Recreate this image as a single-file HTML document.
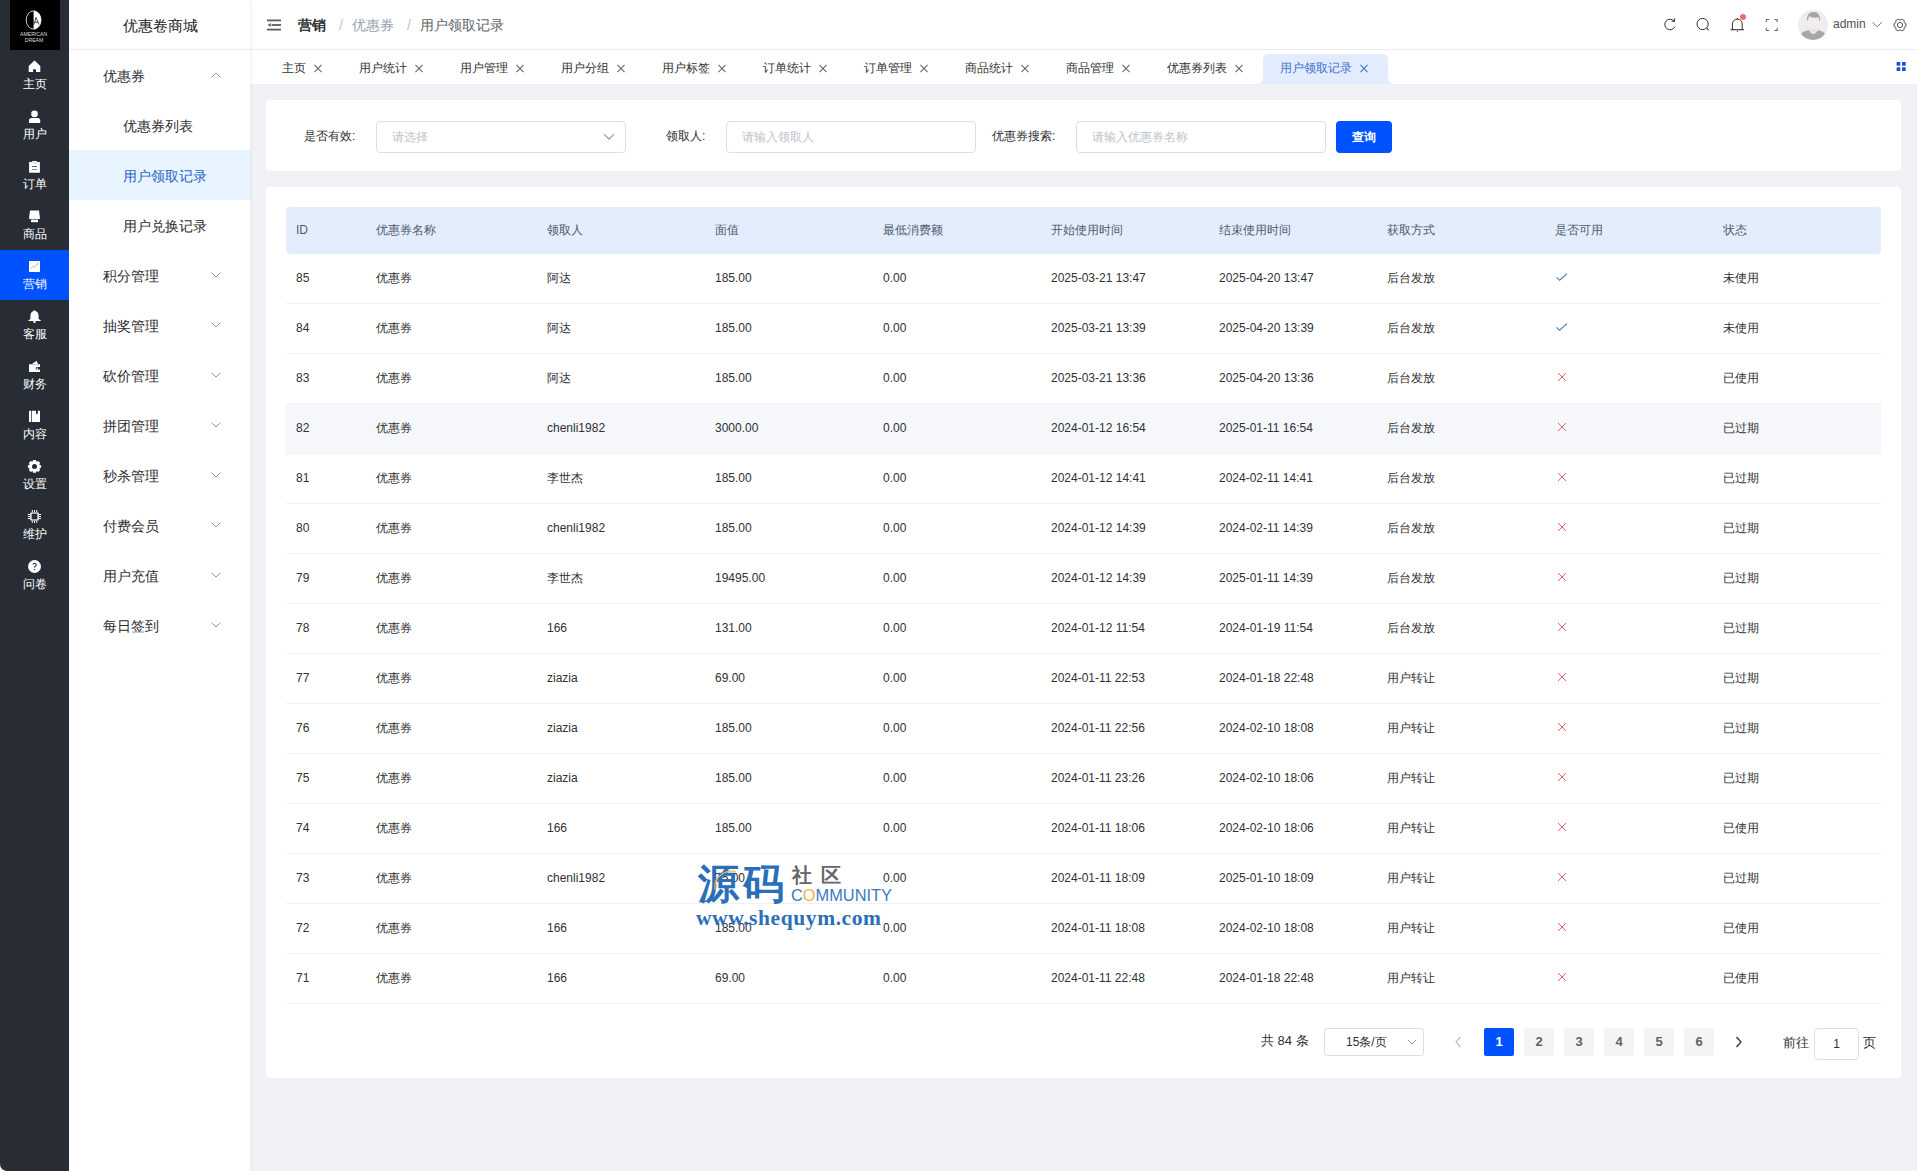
<!DOCTYPE html>
<html><head><meta charset="utf-8">
<style>
*{box-sizing:border-box;margin:0;padding:0}
html,body{width:1917px;height:1171px;overflow:hidden;background:#f0f2f5;font-family:"Liberation Sans",sans-serif;color:#303133}
.abs{position:absolute}
#side1{position:absolute;left:0;top:0;width:69px;height:1171px;background:#282c34;z-index:3;border-bottom-left-radius:7px}
#logo{position:absolute;left:10px;top:0;width:50px;height:50px;background:#000}
.s1{position:absolute;left:0;width:69px;height:50px;color:#fff;text-align:center}
.s1 .ic{position:absolute;left:24px;top:5px}
.s1 .lb{position:absolute;left:0;width:69px;top:26px;font-size:12px;line-height:16px}
.s1.on{background:#0052ff}
#side2{position:absolute;left:69px;top:0;width:181px;height:1171px;background:#fff;z-index:2;box-shadow:1px 0 4px rgba(0,21,41,.06)}
#side2 .title{position:absolute;left:0;top:0;width:181px;height:50px;line-height:50px;text-align:center;font-size:15px;color:#1f2124;padding-left:1px;padding-top:1px;border-bottom:1px solid #e9ebef}
.m{position:absolute;left:0;width:181px;height:50px;line-height:50px;padding-top:1px;font-size:14px;color:#2b2d31}
.m.l1{padding-left:34px}
.m.l2{padding-left:54px}
.m.on{background:#e8f4ff;color:#2a62c9}
.chev{position:absolute;left:142px;top:22px}
#header{position:absolute;left:250px;top:0;width:1667px;height:50px;background:#fff;border-bottom:1px solid #e9ebef}
#tabs{position:absolute;left:250px;top:50px;width:1667px;height:34px;background:#fff}
.tab{position:absolute;top:60px;height:16px;line-height:16px;font-size:12px;color:#303133;white-space:nowrap}
.tabx{position:absolute;top:64px;width:8px;height:8px}
.tabx:before,.tabx:after{content:"";position:absolute;left:-1.5px;top:3.5px;width:10px;height:1px;background:#606266;transform:rotate(45deg)}
.tabx:after{transform:rotate(-45deg)}
.tab.on{color:#3a6ecf}
.tabx.on:before,.tabx.on:after{background:#3a6ecf}
.card{position:absolute;background:#fff;border-radius:4px}
.lbl{position:absolute;top:128px;font-size:12px;line-height:16px;color:#303133;white-space:nowrap}
.inp{position:absolute;top:121px;width:250px;height:32px;border:1px solid #dcdfe6;border-radius:4px;background:#fff}
.ph{position:absolute;left:15px;top:7px;font-size:12px;line-height:16px;color:#c0c4cc;white-space:nowrap}
.btn{position:absolute;left:1336px;top:121px;width:56px;height:32px;border-radius:4px;background:#0052ff;color:#fff;font-size:12px;line-height:32px;text-align:center;font-weight:bold}
.thead{position:absolute;left:286px;top:207px;width:1595px;height:47px;background:#e3edfc;border-radius:4px}
.th{position:absolute;top:222px;font-size:12px;line-height:16px;color:#515a6e;white-space:nowrap}
.td{position:absolute;height:50px;line-height:50px;font-size:12px;color:#303133;white-space:nowrap}
.td svg{vertical-align:middle;position:relative;top:-2px}
.rowline{position:absolute;left:286px;width:1595px;height:1px;background:#eef0f3}
.hover{position:absolute;left:286px;width:1595px;height:50px;background:#f5f7fa}
.pg{position:absolute;top:1028px;width:30px;height:28px;line-height:28px;text-align:center;font-size:13px;font-weight:bold;color:#606266;background:#f4f4f5;border-radius:2px}
.pg.on{background:#0052ff;color:#fff}

</style></head>
<body>
<div class="abs" style="left:0;top:1160px;width:12px;height:11px;background:#fff"></div>
<div id="side1">
  <div id="logo"><svg width="50" height="50" viewBox="0 0 50 50" style="position:absolute;left:0;top:0">
<rect width="50" height="50" fill="#000"/>
<path d="M23.6 10.8 A7.5 9.2 0 0 1 23.6 29.2 Z" fill="#fff"/>
<ellipse cx="23.6" cy="20" rx="7.4" ry="9.1" fill="none" stroke="#fff" stroke-width="0.8"/>
<path d="M23.9 24.6 L26 17.4 L28.9 24.6 M24.8 22.2 H28" fill="none" stroke="#000" stroke-width="0.7"/>
<text x="23.6" y="35.5" font-size="5" fill="#dcdcdc" text-anchor="middle" font-family="Liberation Sans" textLength="27" lengthAdjust="spacingAndGlyphs">AMERICAN</text>
<text x="24" y="41.8" font-size="5" fill="#dcdcdc" text-anchor="middle" font-family="Liberation Sans" textLength="18.5" lengthAdjust="spacingAndGlyphs">DREAM</text>
</svg></div>
  <div class="s1" style="top:50px"><svg class="ic" width="20" height="20" viewBox="0 0 20 20"><path d="M10.5 5.6 L16.3 11 V17.1 H12 V14.2 H9.1 V17.1 H4.7 V11 Z" fill="#fff"/></svg><div class="lb">主页</div></div>
<div class="s1" style="top:100px"><svg class="ic" width="20" height="20" viewBox="0 0 20 20"><circle cx="10.5" cy="8.9" r="3.3" fill="#fff"/><path d="M5 17.9 V15.6 Q5 13 7.6 13 H13.6 Q16.2 13 16.2 15.6 V17.9 Z" fill="#fff"/></svg><div class="lb">用户</div></div>
<div class="s1" style="top:150px"><svg class="ic" width="20" height="20" viewBox="0 0 20 20"><path d="M5.1 7 H8.2 V6 H12.8 V7 H15.9 V17.8 H5.1 Z" fill="#fff"/><rect x="8.2" y="7.6" width="4.6" height="0.6" fill="#9aa"/><rect x="8" y="11" width="5" height="1" fill="#282c34" opacity=".75"/><rect x="8" y="14" width="5" height="1" fill="#282c34" opacity=".55"/></svg><div class="lb">订单</div></div>
<div class="s1" style="top:200px"><svg class="ic" width="20" height="20" viewBox="0 0 20 20"><path d="M6 5.6 H15 L16 13.6 Q15 14.6 13.7 13.8 Q12.3 14.6 10.5 13.8 Q8.7 14.6 7.3 13.8 Q6 14.6 5 13.6 Z" fill="#fff"/><path d="M7 14.6 H14 V17.2 H7 Z" fill="#fff"/></svg><div class="lb">商品</div></div>
<div class="s1 on" style="top:250px"><svg class="ic" width="20" height="20" viewBox="0 0 20 20"><rect x="5" y="6" width="11" height="11" fill="#fff"/><path d="M6.8 13.4 L8.6 11.6 L9.8 12.4 L12 10.4 L13.6 9.2" fill="none" stroke="#8a94a8" stroke-width="0.7"/><path d="M13.4 8.6 L14.4 8.4 L14.2 9.4" fill="none" stroke="#8a94a8" stroke-width="0.6"/></svg><div class="lb">营销</div></div>
<div class="s1" style="top:300px"><svg class="ic" width="20" height="20" viewBox="0 0 20 20"><path d="M10.5 5 Q11.3 6 12.5 6.6 Q14.6 7.6 14.6 10.6 V14 L16.9 15.4 V15.9 H4.3 V15.4 L6.4 14 V10.6 Q6.4 7.6 8.5 6.6 Q9.7 6 10.5 5 Z" fill="#fff"/><path d="M8.9 16.3 H12.1 Q11.9 17.9 10.5 17.9 Q9.1 17.9 8.9 16.3 Z" fill="#fff"/></svg><div class="lb">客服</div></div>
<div class="s1" style="top:350px"><svg class="ic" width="20" height="20" viewBox="0 0 20 20"><path d="M8 9 L12.6 5.8 L14 9 Z" fill="#fff"/><path d="M5 9.2 H16 V11.9 H13.2 Q11.6 11.9 11.6 13.2 Q11.6 14.6 13.2 14.6 H16 V17 H5 Z" fill="#fff"/><circle cx="13.3" cy="13.2" r="0.8" fill="#fff"/></svg><div class="lb">财务</div></div>
<div class="s1" style="top:400px"><svg class="ic" width="20" height="20" viewBox="0 0 20 20"><path d="M5 5.8 H7.2 V17 H5 Z" fill="#fff"/><path d="M7.9 5.8 H12 V9.6 L12.9 8.6 L13.8 9.6 V5.8 H16 V17 H7.9 Z" fill="#fff"/></svg><div class="lb">内容</div></div>
<div class="s1" style="top:450px"><svg class="ic" width="20" height="20" viewBox="0 0 20 20"><path d="M9 5 H12 L12.5 6.8 L14.2 5.9 L16.2 8 L15.3 9.7 L17.1 10.2 V12.8 L15.3 13.3 L16.2 15 L14.2 17 L12.5 16.1 L12 17.8 H9 L8.5 16.1 L6.8 17 L4.8 15 L5.7 13.3 L3.9 12.8 V10.2 L5.7 9.7 L4.8 8 L6.8 5.9 L8.5 6.8 Z" fill="#fff"/><circle cx="10.5" cy="11.5" r="2.5" fill="#282c34"/></svg><div class="lb">设置</div></div>
<div class="s1" style="top:500px"><svg class="ic" width="20" height="20" viewBox="0 0 20 20"><rect x="6.2" y="7.4" width="8.6" height="8.2" rx="1.2" fill="#fff"/><rect x="7.6" y="8.6" width="5.8" height="5.8" fill="#282c34"/><path d="M8.3 5 V7.4 M10.5 5 V7.4 M12.7 5 V7.4 M8.3 15.6 V17.8 M10.5 15.6 V17.8 M12.7 15.6 V17.8 M3.8 9.5 H6.2 M3.8 11.5 H6.2 M3.8 13.5 H6.2 M14.8 9.5 H17 M14.8 11.5 H17 M14.8 13.5 H17" stroke="#fff" stroke-width="1"/></svg><div class="lb">维护</div></div>
<div class="s1" style="top:550px"><svg class="ic" width="20" height="20" viewBox="0 0 20 20"><circle cx="10.5" cy="11.5" r="6.5" fill="#fff"/><path d="M9 9.6 Q9 8.2 10.6 8.2 Q12.2 8.2 12.2 9.6 Q12.2 10.6 11.2 11.2 Q10.5 11.6 10.5 12.6" fill="none" stroke="#282c34" stroke-width="1.1"/><circle cx="10.5" cy="14.6" r="0.7" fill="#282c34"/></svg><div class="lb">问卷</div></div>

</div>
<div id="side2">
  <div class="title">优惠卷商城</div>
  <div class="m l1" style="top:50px">优惠券<svg class="chev" width="10" height="6" viewBox="0 0 10 6"><path d="M0.6 5.4 L5 1 L9.4 5.4" fill="none" stroke="#909399" stroke-width="1"/></svg></div>
<div class="m l2" style="top:100px">优惠券列表</div>
<div class="m l2 on" style="top:150px">用户领取记录</div>
<div class="m l2" style="top:200px">用户兑换记录</div>
<div class="m l1" style="top:250px">积分管理<svg class="chev" width="10" height="6" viewBox="0 0 10 6"><path d="M0.6 0.6 L5 5 L9.4 0.6" fill="none" stroke="#909399" stroke-width="1"/></svg></div>
<div class="m l1" style="top:300px">抽奖管理<svg class="chev" width="10" height="6" viewBox="0 0 10 6"><path d="M0.6 0.6 L5 5 L9.4 0.6" fill="none" stroke="#909399" stroke-width="1"/></svg></div>
<div class="m l1" style="top:350px">砍价管理<svg class="chev" width="10" height="6" viewBox="0 0 10 6"><path d="M0.6 0.6 L5 5 L9.4 0.6" fill="none" stroke="#909399" stroke-width="1"/></svg></div>
<div class="m l1" style="top:400px">拼团管理<svg class="chev" width="10" height="6" viewBox="0 0 10 6"><path d="M0.6 0.6 L5 5 L9.4 0.6" fill="none" stroke="#909399" stroke-width="1"/></svg></div>
<div class="m l1" style="top:450px">秒杀管理<svg class="chev" width="10" height="6" viewBox="0 0 10 6"><path d="M0.6 0.6 L5 5 L9.4 0.6" fill="none" stroke="#909399" stroke-width="1"/></svg></div>
<div class="m l1" style="top:500px">付费会员<svg class="chev" width="10" height="6" viewBox="0 0 10 6"><path d="M0.6 0.6 L5 5 L9.4 0.6" fill="none" stroke="#909399" stroke-width="1"/></svg></div>
<div class="m l1" style="top:550px">用户充值<svg class="chev" width="10" height="6" viewBox="0 0 10 6"><path d="M0.6 0.6 L5 5 L9.4 0.6" fill="none" stroke="#909399" stroke-width="1"/></svg></div>
<div class="m l1" style="top:600px">每日签到<svg class="chev" width="10" height="6" viewBox="0 0 10 6"><path d="M0.6 0.6 L5 5 L9.4 0.6" fill="none" stroke="#909399" stroke-width="1"/></svg></div>

</div>
<div id="header">
</div>
<svg class="abs" style="left:267px;top:19.4px" width="15" height="12" viewBox="0 0 15 12"><rect x="0" y="0.5" width="14" height="1.8" fill="#5a5e66"/><rect x="4.5" y="5.1" width="9.5" height="1.8" fill="#5a5e66"/><rect x="0" y="9.7" width="14" height="1.8" fill="#5a5e66"/><path d="M0.6 6 L3.6 4 V8 Z" fill="#5a5e66"/></svg>
<div class="abs" style="left:298px;top:17px;font-size:14px;line-height:16px;font-weight:bold;color:#303133">营销</div>
<div class="abs" style="left:339px;top:17px;font-size:14px;line-height:16px;color:#c0c4cc">/</div>
<div class="abs" style="left:352px;top:17px;font-size:14px;line-height:16px;color:#97a0ac">优惠券</div>
<div class="abs" style="left:407px;top:17px;font-size:14px;line-height:16px;color:#c0c4cc">/</div>
<div class="abs" style="left:420px;top:17px;font-size:14px;line-height:16px;color:#606266">用户领取记录</div>

<svg class="abs" style="left:1660px;top:15px" width="20" height="20" viewBox="0 0 20 20"><path d="M14.4 6.4 A5.3 5.3 0 1 0 15 11.5" fill="none" stroke="#303133" stroke-width="1"/><path d="M11.6 6.3 H14.6 V3.3" fill="none" stroke="#303133" stroke-width="1"/></svg>
<svg class="abs" style="left:1693px;top:14px" width="20" height="20" viewBox="0 0 20 20"><circle cx="9.6" cy="10" r="5.6" fill="none" stroke="#303133" stroke-width="1"/><path d="M13.6 14 L15.6 16.2" stroke="#303133" stroke-width="1.1"/></svg>
<svg class="abs" style="left:1727px;top:10px" width="24" height="24" viewBox="0 0 24 24"><path d="M5.4 19.5 V14 A4.9 4.9 0 0 1 15.2 14 V19.5" fill="none" stroke="#303133" stroke-width="1"/><path d="M3.6 19.7 H17" stroke="#303133" stroke-width="1.1"/><circle cx="10.3" cy="21.6" r="0.6" fill="#303133"/><circle cx="10.3" cy="8.7" r="0.6" fill="#303133"/><circle cx="16" cy="7" r="3" fill="#ef6b6b"/></svg>
<svg class="abs" style="left:1762px;top:15px" width="20" height="20" viewBox="0 0 20 20"><path d="M4.3 7.2 V4.5 H7 M12.5 4.5 H15.2 V7.2 M15.2 12.8 V15.5 H12.5 M7 15.5 H4.3 V12.8" fill="none" stroke="#50555e" stroke-width="1"/></svg>
<svg class="abs" style="left:1798px;top:10px" width="30" height="30" viewBox="0 0 30 30"><defs><clipPath id="avc"><circle cx="15" cy="15" r="15"/></clipPath></defs><circle cx="15" cy="15" r="15" fill="#ededed"/><g clip-path="url(#avc)"><path d="M1.5 25.5 Q5 20.8 11 20.2 Q13 23.8 15.3 23.8 Q17.6 23.8 19.6 20.2 Q25.6 20.8 28.5 25.5 L32 32 H-2 Z" fill="#a7a7a7"/><path d="M11 16 H19.8 V20.4 Q17.6 24 15.3 24 Q13 24 11 20.4 Z" fill="#e9e4e4"/><path d="M9.3 9 Q9.3 19.6 15.4 19.6 Q21.5 19.6 21.5 9 Z" fill="#f3eded"/><path d="M9 10.4 Q8.5 1.9 15.5 1.9 Q22.5 1.9 22.1 10.8 H21.2 Q21 7.6 20.6 7.2 Q17 7.9 14.3 7.6 Q12.7 7.1 11.6 6.1 Q10.2 7.4 10 10.4 Z" fill="#a5a5a5"/></g></svg>
<div class="abs" style="left:1833px;top:16px;font-size:12px;line-height:16px;color:#4a4f5a">admin</div>
<svg class="abs" style="left:1871px;top:20px" width="12" height="9" viewBox="0 0 12 9"><path d="M1.6 2.2 L6.2 6.8 L10.8 2.2" fill="none" stroke="#707580" stroke-width="1"/></svg>
<svg class="abs" style="left:1890px;top:14.7px" width="20" height="20" viewBox="0 0 20 20"><path d="M15.94 8.63 L15.94 11.37 L14.16 12.40 L14.16 14.46 L11.78 15.83 L10.00 14.80 L8.22 15.83 L5.84 14.46 L5.84 12.40 L4.06 11.37 L4.06 8.63 L5.84 7.60 L5.84 5.54 L8.22 4.17 L10.00 5.20 L11.78 4.17 L14.16 5.54 L14.16 7.60 Z" fill="none" stroke="#50555e" stroke-width="1" stroke-linejoin="round"/><circle cx="10" cy="10" r="2.6" fill="none" stroke="#50555e" stroke-width="1"/></svg>

<div id="tabs"></div>
<svg class="abs" style="left:1258px;top:54px" width="136" height="30" viewBox="0 0 136 30"><path d="M0 30 Q4 30 5 24 V6 Q5 0 11 0 H124 Q130 0 130 6 V24 Q131 30 135 30 Z" fill="#e3ecfc"/></svg>
<div class="tab" style="left:282px">主页</div><div class="tabx" style="left:314px"></div><div class="tab" style="left:359px">用户统计</div><div class="tabx" style="left:415px"></div><div class="tab" style="left:460px">用户管理</div><div class="tabx" style="left:516px"></div><div class="tab" style="left:561px">用户分组</div><div class="tabx" style="left:617px"></div><div class="tab" style="left:662px">用户标签</div><div class="tabx" style="left:718px"></div><div class="tab" style="left:763px">订单统计</div><div class="tabx" style="left:819px"></div><div class="tab" style="left:864px">订单管理</div><div class="tabx" style="left:920px"></div><div class="tab" style="left:965px">商品统计</div><div class="tabx" style="left:1021px"></div><div class="tab" style="left:1066px">商品管理</div><div class="tabx" style="left:1122px"></div><div class="tab" style="left:1167px">优惠券列表</div><div class="tabx" style="left:1235px"></div>
<div class="tab on" style="left:1280px">用户领取记录</div><div class="tabx on" style="left:1360px"></div>
<svg class="abs" style="left:1896px;top:62px" width="10" height="9" viewBox="0 0 10 9"><rect x="0.6" y="0" width="3.7" height="3.7" rx="0.5" fill="#1a4fd6"/><rect x="6" y="0" width="3.7" height="3.7" rx="0.5" fill="#1a4fd6"/><rect x="0.6" y="5.2" width="3.7" height="3.7" rx="0.5" fill="#1a4fd6"/><rect x="6" y="5.2" width="3.7" height="3.7" rx="0.5" fill="#1a4fd6"/></svg>

<div class="card" style="left:266px;top:100px;width:1635px;height:71px"></div>
<div class="lbl" style="left:304px">是否有效:</div>
<div class="inp" style="left:376px"><div class="ph">请选择</div>
<svg style="position:absolute;left:226px;top:11px" width="12" height="8" viewBox="0 0 12 8"><path d="M1 1.2 L6 6.2 L11 1.2" fill="none" stroke="#909399" stroke-width="1.1"/></svg></div>
<div class="lbl" style="left:666px">领取人:</div>
<div class="inp" style="left:726px"><div class="ph">请输入领取人</div></div>
<div class="lbl" style="left:992px">优惠券搜索:</div>
<div class="inp" style="left:1076px"><div class="ph">请输入优惠券名称</div></div>
<div class="btn">查询</div>

<div class="card" style="left:266px;top:187px;width:1635px;height:891px"></div>
<div class="thead"></div><div class="th" style="left:296px">ID</div><div class="th" style="left:376px">优惠券名称</div><div class="th" style="left:547px">领取人</div><div class="th" style="left:715px">面值</div><div class="th" style="left:883px">最低消费额</div><div class="th" style="left:1051px">开始使用时间</div><div class="th" style="left:1219px">结束使用时间</div><div class="th" style="left:1387px">获取方式</div><div class="th" style="left:1555px">是否可用</div><div class="th" style="left:1723px">状态</div>
<div class="rowline" style="top:303px"></div><div class="td" style="left:296px;top:253px">85</div><div class="td" style="left:376px;top:253px">优惠券</div><div class="td" style="left:547px;top:253px">阿达</div><div class="td" style="left:715px;top:253px">185.00</div><div class="td" style="left:883px;top:253px">0.00</div><div class="td" style="left:1051px;top:253px">2025-03-21 13:47</div><div class="td" style="left:1219px;top:253px">2025-04-20 13:47</div><div class="td" style="left:1387px;top:253px">后台发放</div><div class="td" style="left:1555px;top:253px"><svg class="ok" width="13" height="12" viewBox="0 0 13 12"><path d="M1.6 6.4 L4.6 9.3 L12 2.6" fill="none" stroke="#3a80b8" stroke-width="1.15"/></svg></div><div class="td" style="left:1723px;top:253px">未使用</div>
<div class="rowline" style="top:353px"></div><div class="td" style="left:296px;top:303px">84</div><div class="td" style="left:376px;top:303px">优惠券</div><div class="td" style="left:547px;top:303px">阿达</div><div class="td" style="left:715px;top:303px">185.00</div><div class="td" style="left:883px;top:303px">0.00</div><div class="td" style="left:1051px;top:303px">2025-03-21 13:39</div><div class="td" style="left:1219px;top:303px">2025-04-20 13:39</div><div class="td" style="left:1387px;top:303px">后台发放</div><div class="td" style="left:1555px;top:303px"><svg class="ok" width="13" height="12" viewBox="0 0 13 12"><path d="M1.6 6.4 L4.6 9.3 L12 2.6" fill="none" stroke="#3a80b8" stroke-width="1.15"/></svg></div><div class="td" style="left:1723px;top:303px">未使用</div>
<div class="rowline" style="top:403px"></div><div class="td" style="left:296px;top:353px">83</div><div class="td" style="left:376px;top:353px">优惠券</div><div class="td" style="left:547px;top:353px">阿达</div><div class="td" style="left:715px;top:353px">185.00</div><div class="td" style="left:883px;top:353px">0.00</div><div class="td" style="left:1051px;top:353px">2025-03-21 13:36</div><div class="td" style="left:1219px;top:353px">2025-04-20 13:36</div><div class="td" style="left:1387px;top:353px">后台发放</div><div class="td" style="left:1555px;top:353px"><svg class="no" width="13" height="12" viewBox="0 0 13 12"><path d="M3 2 L11 10 M11 2 L3 10" fill="none" stroke="#e06468" stroke-width="1"/></svg></div><div class="td" style="left:1723px;top:353px">已使用</div>
<div class="hover" style="top:403px"></div><div class="rowline" style="top:453px"></div><div class="td" style="left:296px;top:403px">82</div><div class="td" style="left:376px;top:403px">优惠券</div><div class="td" style="left:547px;top:403px">chenli1982</div><div class="td" style="left:715px;top:403px">3000.00</div><div class="td" style="left:883px;top:403px">0.00</div><div class="td" style="left:1051px;top:403px">2024-01-12 16:54</div><div class="td" style="left:1219px;top:403px">2025-01-11 16:54</div><div class="td" style="left:1387px;top:403px">后台发放</div><div class="td" style="left:1555px;top:403px"><svg class="no" width="13" height="12" viewBox="0 0 13 12"><path d="M3 2 L11 10 M11 2 L3 10" fill="none" stroke="#e06468" stroke-width="1"/></svg></div><div class="td" style="left:1723px;top:403px">已过期</div>
<div class="rowline" style="top:503px"></div><div class="td" style="left:296px;top:453px">81</div><div class="td" style="left:376px;top:453px">优惠券</div><div class="td" style="left:547px;top:453px">李世杰</div><div class="td" style="left:715px;top:453px">185.00</div><div class="td" style="left:883px;top:453px">0.00</div><div class="td" style="left:1051px;top:453px">2024-01-12 14:41</div><div class="td" style="left:1219px;top:453px">2024-02-11 14:41</div><div class="td" style="left:1387px;top:453px">后台发放</div><div class="td" style="left:1555px;top:453px"><svg class="no" width="13" height="12" viewBox="0 0 13 12"><path d="M3 2 L11 10 M11 2 L3 10" fill="none" stroke="#e06468" stroke-width="1"/></svg></div><div class="td" style="left:1723px;top:453px">已过期</div>
<div class="rowline" style="top:553px"></div><div class="td" style="left:296px;top:503px">80</div><div class="td" style="left:376px;top:503px">优惠券</div><div class="td" style="left:547px;top:503px">chenli1982</div><div class="td" style="left:715px;top:503px">185.00</div><div class="td" style="left:883px;top:503px">0.00</div><div class="td" style="left:1051px;top:503px">2024-01-12 14:39</div><div class="td" style="left:1219px;top:503px">2024-02-11 14:39</div><div class="td" style="left:1387px;top:503px">后台发放</div><div class="td" style="left:1555px;top:503px"><svg class="no" width="13" height="12" viewBox="0 0 13 12"><path d="M3 2 L11 10 M11 2 L3 10" fill="none" stroke="#e06468" stroke-width="1"/></svg></div><div class="td" style="left:1723px;top:503px">已过期</div>
<div class="rowline" style="top:603px"></div><div class="td" style="left:296px;top:553px">79</div><div class="td" style="left:376px;top:553px">优惠券</div><div class="td" style="left:547px;top:553px">李世杰</div><div class="td" style="left:715px;top:553px">19495.00</div><div class="td" style="left:883px;top:553px">0.00</div><div class="td" style="left:1051px;top:553px">2024-01-12 14:39</div><div class="td" style="left:1219px;top:553px">2025-01-11 14:39</div><div class="td" style="left:1387px;top:553px">后台发放</div><div class="td" style="left:1555px;top:553px"><svg class="no" width="13" height="12" viewBox="0 0 13 12"><path d="M3 2 L11 10 M11 2 L3 10" fill="none" stroke="#e06468" stroke-width="1"/></svg></div><div class="td" style="left:1723px;top:553px">已过期</div>
<div class="rowline" style="top:653px"></div><div class="td" style="left:296px;top:603px">78</div><div class="td" style="left:376px;top:603px">优惠券</div><div class="td" style="left:547px;top:603px">166</div><div class="td" style="left:715px;top:603px">131.00</div><div class="td" style="left:883px;top:603px">0.00</div><div class="td" style="left:1051px;top:603px">2024-01-12 11:54</div><div class="td" style="left:1219px;top:603px">2024-01-19 11:54</div><div class="td" style="left:1387px;top:603px">后台发放</div><div class="td" style="left:1555px;top:603px"><svg class="no" width="13" height="12" viewBox="0 0 13 12"><path d="M3 2 L11 10 M11 2 L3 10" fill="none" stroke="#e06468" stroke-width="1"/></svg></div><div class="td" style="left:1723px;top:603px">已过期</div>
<div class="rowline" style="top:703px"></div><div class="td" style="left:296px;top:653px">77</div><div class="td" style="left:376px;top:653px">优惠券</div><div class="td" style="left:547px;top:653px">ziazia</div><div class="td" style="left:715px;top:653px">69.00</div><div class="td" style="left:883px;top:653px">0.00</div><div class="td" style="left:1051px;top:653px">2024-01-11 22:53</div><div class="td" style="left:1219px;top:653px">2024-01-18 22:48</div><div class="td" style="left:1387px;top:653px">用户转让</div><div class="td" style="left:1555px;top:653px"><svg class="no" width="13" height="12" viewBox="0 0 13 12"><path d="M3 2 L11 10 M11 2 L3 10" fill="none" stroke="#e06468" stroke-width="1"/></svg></div><div class="td" style="left:1723px;top:653px">已过期</div>
<div class="rowline" style="top:753px"></div><div class="td" style="left:296px;top:703px">76</div><div class="td" style="left:376px;top:703px">优惠券</div><div class="td" style="left:547px;top:703px">ziazia</div><div class="td" style="left:715px;top:703px">185.00</div><div class="td" style="left:883px;top:703px">0.00</div><div class="td" style="left:1051px;top:703px">2024-01-11 22:56</div><div class="td" style="left:1219px;top:703px">2024-02-10 18:08</div><div class="td" style="left:1387px;top:703px">用户转让</div><div class="td" style="left:1555px;top:703px"><svg class="no" width="13" height="12" viewBox="0 0 13 12"><path d="M3 2 L11 10 M11 2 L3 10" fill="none" stroke="#e06468" stroke-width="1"/></svg></div><div class="td" style="left:1723px;top:703px">已过期</div>
<div class="rowline" style="top:803px"></div><div class="td" style="left:296px;top:753px">75</div><div class="td" style="left:376px;top:753px">优惠券</div><div class="td" style="left:547px;top:753px">ziazia</div><div class="td" style="left:715px;top:753px">185.00</div><div class="td" style="left:883px;top:753px">0.00</div><div class="td" style="left:1051px;top:753px">2024-01-11 23:26</div><div class="td" style="left:1219px;top:753px">2024-02-10 18:06</div><div class="td" style="left:1387px;top:753px">用户转让</div><div class="td" style="left:1555px;top:753px"><svg class="no" width="13" height="12" viewBox="0 0 13 12"><path d="M3 2 L11 10 M11 2 L3 10" fill="none" stroke="#e06468" stroke-width="1"/></svg></div><div class="td" style="left:1723px;top:753px">已过期</div>
<div class="rowline" style="top:853px"></div><div class="td" style="left:296px;top:803px">74</div><div class="td" style="left:376px;top:803px">优惠券</div><div class="td" style="left:547px;top:803px">166</div><div class="td" style="left:715px;top:803px">185.00</div><div class="td" style="left:883px;top:803px">0.00</div><div class="td" style="left:1051px;top:803px">2024-01-11 18:06</div><div class="td" style="left:1219px;top:803px">2024-02-10 18:06</div><div class="td" style="left:1387px;top:803px">用户转让</div><div class="td" style="left:1555px;top:803px"><svg class="no" width="13" height="12" viewBox="0 0 13 12"><path d="M3 2 L11 10 M11 2 L3 10" fill="none" stroke="#e06468" stroke-width="1"/></svg></div><div class="td" style="left:1723px;top:803px">已使用</div>
<div class="rowline" style="top:903px"></div><div class="td" style="left:296px;top:853px">73</div><div class="td" style="left:376px;top:853px">优惠券</div><div class="td" style="left:547px;top:853px">chenli1982</div><div class="td" style="left:715px;top:853px">75.00</div><div class="td" style="left:883px;top:853px">0.00</div><div class="td" style="left:1051px;top:853px">2024-01-11 18:09</div><div class="td" style="left:1219px;top:853px">2025-01-10 18:09</div><div class="td" style="left:1387px;top:853px">用户转让</div><div class="td" style="left:1555px;top:853px"><svg class="no" width="13" height="12" viewBox="0 0 13 12"><path d="M3 2 L11 10 M11 2 L3 10" fill="none" stroke="#e06468" stroke-width="1"/></svg></div><div class="td" style="left:1723px;top:853px">已过期</div>
<div class="rowline" style="top:953px"></div><div class="td" style="left:296px;top:903px">72</div><div class="td" style="left:376px;top:903px">优惠券</div><div class="td" style="left:547px;top:903px">166</div><div class="td" style="left:715px;top:903px">185.00</div><div class="td" style="left:883px;top:903px">0.00</div><div class="td" style="left:1051px;top:903px">2024-01-11 18:08</div><div class="td" style="left:1219px;top:903px">2024-02-10 18:08</div><div class="td" style="left:1387px;top:903px">用户转让</div><div class="td" style="left:1555px;top:903px"><svg class="no" width="13" height="12" viewBox="0 0 13 12"><path d="M3 2 L11 10 M11 2 L3 10" fill="none" stroke="#e06468" stroke-width="1"/></svg></div><div class="td" style="left:1723px;top:903px">已使用</div>
<div class="rowline" style="top:1003px"></div><div class="td" style="left:296px;top:953px">71</div><div class="td" style="left:376px;top:953px">优惠券</div><div class="td" style="left:547px;top:953px">166</div><div class="td" style="left:715px;top:953px">69.00</div><div class="td" style="left:883px;top:953px">0.00</div><div class="td" style="left:1051px;top:953px">2024-01-11 22:48</div><div class="td" style="left:1219px;top:953px">2024-01-18 22:48</div><div class="td" style="left:1387px;top:953px">用户转让</div><div class="td" style="left:1555px;top:953px"><svg class="no" width="13" height="12" viewBox="0 0 13 12"><path d="M3 2 L11 10 M11 2 L3 10" fill="none" stroke="#e06468" stroke-width="1"/></svg></div><div class="td" style="left:1723px;top:953px">已使用</div>

<div class="abs" style="left:1261px;top:1033px;font-size:13px;line-height:16px;color:#303133;white-space:nowrap">共 84 条</div>
<div class="abs" style="left:1324px;top:1028px;width:100px;height:28px;border:1px solid #dcdfe6;border-radius:3px;background:#fff">
  <div class="abs" style="left:21px;top:5px;font-size:12px;line-height:16px;color:#303133;white-space:nowrap">15条/页</div>
  <svg class="abs" style="left:82px;top:10px" width="10" height="7" viewBox="0 0 10 7"><path d="M1 1 L5 5 L9 1" fill="none" stroke="#909399" stroke-width="1"/></svg>
</div>
<svg class="abs" style="left:1453px;top:1036px" width="10" height="12" viewBox="0 0 10 12"><path d="M7.5 1 L3 6 L7.5 11" fill="none" stroke="#c0c4cc" stroke-width="1.3"/></svg>
<div class="pg on" style="left:1484px">1</div>
<div class="pg" style="left:1524px">2</div>
<div class="pg" style="left:1564px">3</div>
<div class="pg" style="left:1604px">4</div>
<div class="pg" style="left:1644px">5</div>
<div class="pg" style="left:1684px">6</div>
<svg class="abs" style="left:1734px;top:1036px" width="10" height="12" viewBox="0 0 10 12"><path d="M2.5 1 L7 6 L2.5 11" fill="none" stroke="#303133" stroke-width="1.3"/></svg>
<div class="abs" style="left:1783px;top:1035px;font-size:13px;line-height:16px;color:#303133">前往</div>
<div class="abs" style="left:1814px;top:1028px;width:45px;height:32px;border:1px solid #dcdfe6;border-radius:4px;background:#fff;text-align:center;font-size:12px;line-height:30px;color:#303133">1</div>
<div class="abs" style="left:1863px;top:1035px;font-size:13px;line-height:16px;color:#303133">页</div>

<div class="abs" style="left:698px;top:860px;font-size:41px;line-height:48px;font-weight:bold;color:#2b6fb8;white-space:nowrap;letter-spacing:4px;z-index:5">源码</div>
<div class="abs" style="left:792px;top:863px;font-size:20px;line-height:24px;font-weight:bold;color:#666;white-space:nowrap;letter-spacing:9px;z-index:5">社区</div>
<svg class="abs" style="left:790px;top:886px;z-index:5" width="104" height="17" viewBox="0 0 104 17"><text x="1" y="14.5" font-size="16" font-family="Liberation Sans" textLength="101" lengthAdjust="spacingAndGlyphs" fill="#3d7ac2">C<tspan fill="#f0b73a">O</tspan>MMUNITY</text></svg>
<svg class="abs" style="left:710px;top:866px;z-index:6" width="30" height="30" viewBox="0 0 30 30"><path d="M5 24 Q3 14 12 8 Q20 3 26 6" fill="none" stroke="#f0b73a" stroke-width="1.2"/></svg>
<svg class="abs" style="left:694px;top:905px;z-index:5" width="192" height="28" viewBox="0 0 192 28"><text x="2" y="19.5" font-size="21.5" font-weight="bold" font-family="Liberation Serif" textLength="185" lengthAdjust="spacing" fill="#2b6fb8">www.shequym.com</text></svg>


</body></html>
